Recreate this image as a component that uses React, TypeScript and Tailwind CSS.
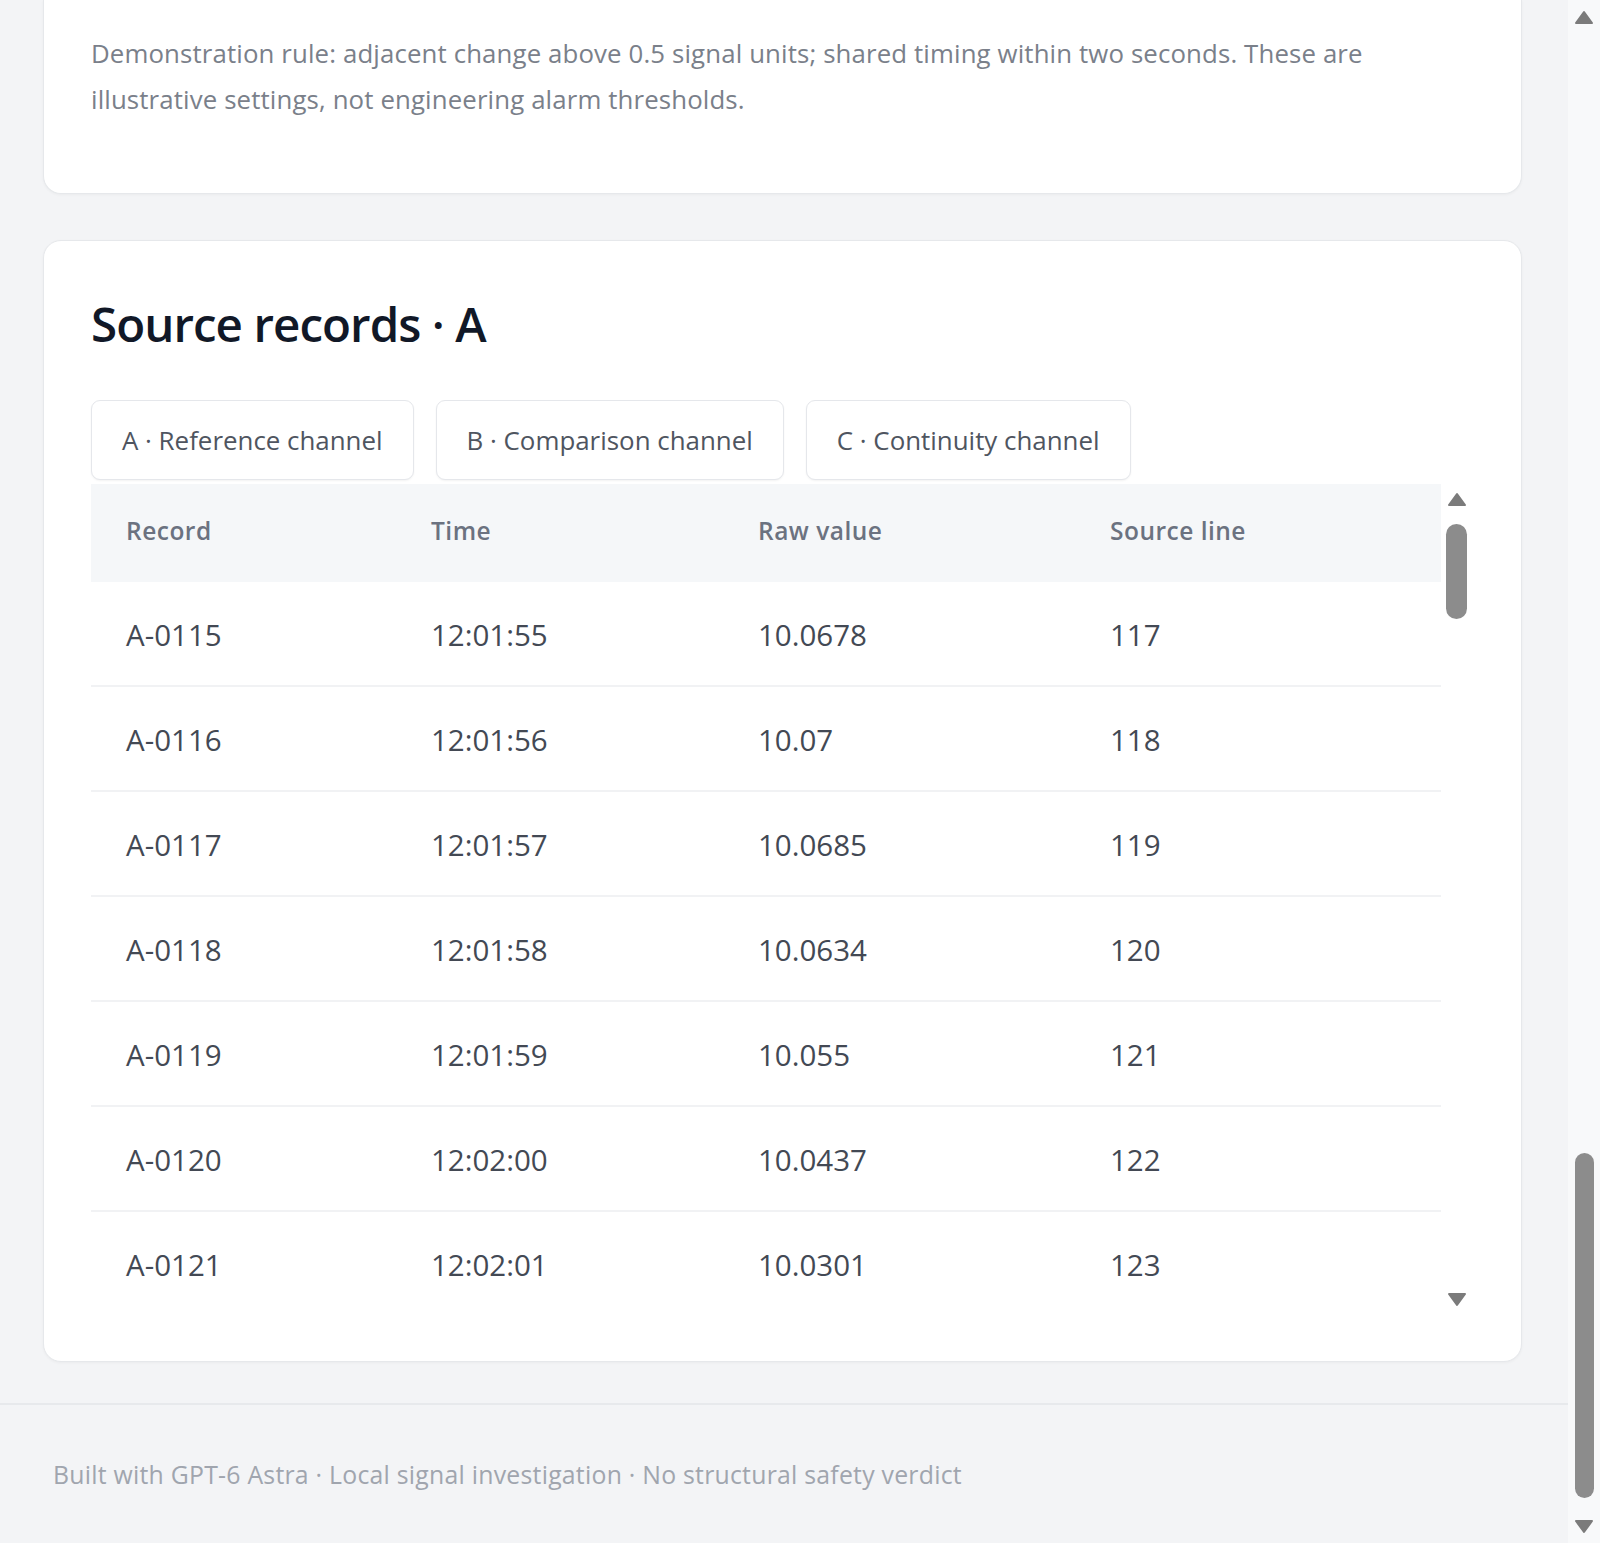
import React from 'react';

const rows = [
  { id: 'A-0115', time: '12:01:55', value: '10.0678', line: '117' },
  { id: 'A-0116', time: '12:01:56', value: '10.07', line: '118' },
  { id: 'A-0117', time: '12:01:57', value: '10.0685', line: '119' },
  { id: 'A-0118', time: '12:01:58', value: '10.0634', line: '120' },
  { id: 'A-0119', time: '12:01:59', value: '10.055', line: '121' },
  { id: 'A-0120', time: '12:02:00', value: '10.0437', line: '122' },
  { id: 'A-0121', time: '12:02:01', value: '10.0301', line: '123' },
];

const channels = ['A · Reference channel', 'B · Comparison channel', 'C · Continuity channel'];

function Arrow({ down = false }: { down?: boolean }) {
  return (
    <svg width="22" height="16" viewBox="0 0 22 16" className="shrink-0">
      <path
        d={down ? 'M3 3 H19 L11 14 Z' : 'M11 2 L19 13 H3 Z'}
        fill="#7b7b7b"
        stroke="#7b7b7b"
        strokeWidth="2"
        strokeLinejoin="round"
      />
    </svg>
  );
}

export default function App() {
  return (
    <div className="flex h-[1543px] overflow-hidden bg-[#f3f4f6] font-['Open_Sans','Noto_Sans',sans-serif]">
      {/* Page */}
      <div className="flex flex-1 flex-col">
        <div className="pl-[43px] pr-[46px]">
          {/* Rule card (top cut off by scroll) */}
          <div className="rounded-b-[18px] border-x border-b border-[#e6e8eb] bg-white px-[47px] pt-[30px] pb-[71px] shadow-[0_1px_3px_rgba(0,0,0,0.04)]">
            <p className="text-[25.8px] leading-[46px] tracking-[0.005em] text-[#7a808a]">
              Demonstration rule: adjacent change above 0.5 signal units; shared timing within two seconds. These are
              <br />
              illustrative settings, not engineering alarm thresholds.
            </p>
          </div>

          {/* Source records */}
          <div className="mt-[46px] rounded-[18px] border border-[#e6e8eb] bg-white pl-[47px] pr-[49px] pt-[56px] pb-[47px] shadow-[0_1px_3px_rgba(0,0,0,0.04)]">
            <h2 className="text-[47.5px] leading-[54px] font-semibold tracking-[-0.02em] text-[#111827]">
              Source records · A
            </h2>

            <div className="mt-[49px] flex gap-[22px]">
              {channels.map((c) => (
                <button
                  key={c}
                  className="h-[80px] rounded-[9px] border border-[#e5e7eb] bg-white px-[30px] text-[25.9px] text-[#4f5560] shadow-[0_1px_2px_rgba(0,0,0,0.05)]"
                >
                  {c}
                </button>
              ))}
            </div>

            <div className="mt-[4px] flex h-[830px] overflow-hidden">
              <div className="flex-1">
                <div className="grid h-[98px] grid-cols-[305px_327px_352px_1fr] items-center bg-[#f5f7f9] pl-[35px] pr-[28px] pb-[3px] text-[24.5px] font-semibold tracking-[0.02em] text-[#6b7280]">
                  <div>Record</div>
                  <div>Time</div>
                  <div>Raw value</div>
                  <div>Source line</div>
                </div>
                {rows.map((r) => (
                  <div
                    key={r.id}
                    className="grid h-[105px] grid-cols-[305px_327px_352px_1fr] items-center border-b-2 border-[#f1f2f4] pl-[35px] pr-[28px] pt-[3px] text-[29.5px] text-[#434954]"
                  >
                    <div>{r.id}</div>
                    <div>{r.time}</div>
                    <div>{r.value}</div>
                    <div>{r.line}</div>
                  </div>
                ))}
              </div>

              {/* Table scrollbar */}
              <div className="flex w-[31px] flex-col items-center pt-[8px] pb-[7px]">
                <Arrow />
                <div className="mt-[16px] h-[95px] w-[21px] rounded-full bg-[#8c8c8c]" />
                <div className="flex-1" />
                <Arrow down />
              </div>
            </div>
          </div>
        </div>

        <footer className="mt-[41px] flex-1 border-t-2 border-[#e7e9ec] pl-[53px] pt-[54px] text-[24.8px] leading-[30px] tracking-[0.01em] text-[#a0a5ae]">
          Built with GPT-6 Astra · Local signal investigation · No structural safety verdict
        </footer>
      </div>

      {/* Window scrollbar */}
      <div className="flex w-[32px] flex-col items-center bg-[#f8f9fa] pt-[10px] pb-[9px]">
        <Arrow />
        <div className="flex-1" />
        <div className="h-[345px] w-[19px] rounded-full bg-[#8c8c8c]" />
        <div className="mt-[20px]">
          <Arrow down />
        </div>
      </div>
    </div>
  );
}
